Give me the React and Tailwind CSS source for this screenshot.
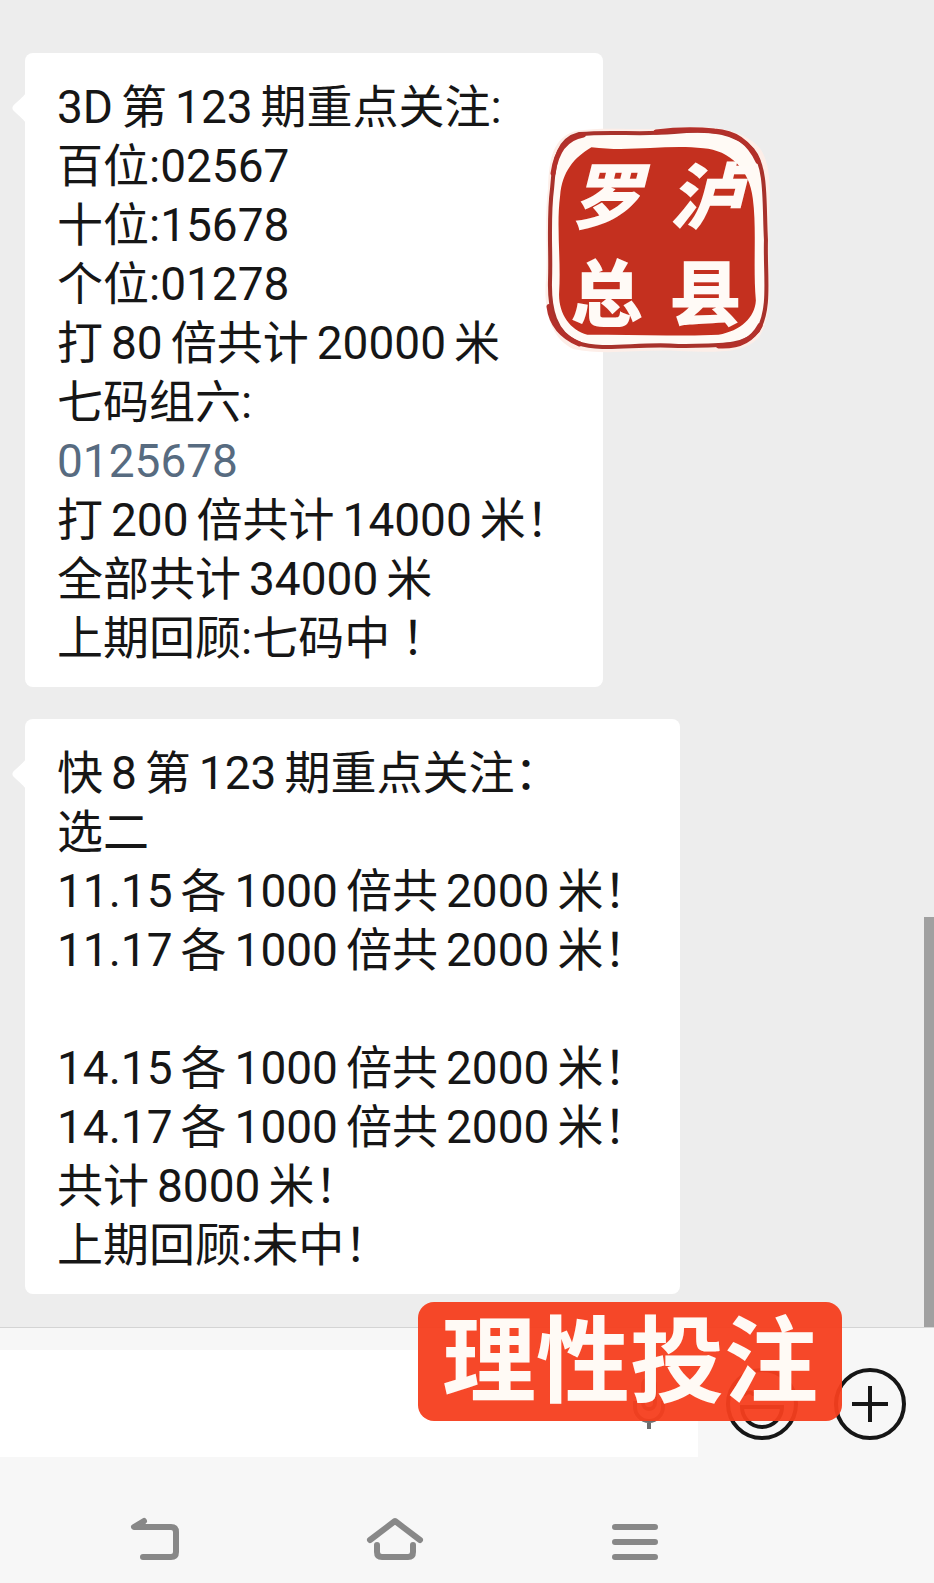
import React, { useState } from "react";

// Latin digits inside Chinese text get a little air on both sides
const Num = ({ children }) => <span className="mx-2">{children}</span>;

const BubbleTail = () => (
  <svg
    className="absolute -left-[13px] top-[40px] h-[30px] w-[14px] text-white"
    viewBox="0 0 14 30"
    fill="currentColor"
    aria-hidden="true"
  >
    <path d="M14 0C11 4 5 9 1.6 12.2Q-.8 15 1.6 17.8C5 21 11 26 14 30Z" />
  </svg>
);

const Bubble = ({ children }) => (
  <div className="relative w-fit rounded-lg bg-white pt-[25px] pr-[31px] pb-[19px] pl-8 text-[46px] leading-[59px] whitespace-nowrap text-[#161616]">
    <BubbleTail />
    {children}
  </div>
);

const Seal = () => (
  <div className="absolute top-[74px] left-[520px] h-[226px] w-[226px]">
    <svg className="h-full w-full" viewBox="0 0 224 224" aria-hidden="true">
      <path
        d="M30 4C60 -1 90 4 128 1C165 -3 198 3 213 21C228 42 221 82 222 112C221 146 228 180 213 207C199 226 168 223 132 222C94 220 60 227 28 220C7 210 -2 184 1 151C3 119 -1 91 3 61C4 31 8 11 30 4Z"
        fill="#fdeee8"
      />
      <path
        d="M34 7C68 4 91 8 128 5C165 1 190 5 206 23C220 40 217 76 219 112C218 148 224 179 211 202C197 219 170 216 132 217C91 214 58 223 32 214C10 204 4 181 5 151C6 122 3 91 7 61C9 30 14 12 34 7Z"
        fill="#fffaf5"
        stroke="#a8322b"
        strokeWidth="4"
      />
      <path
        d="M34 215C15 207 6 194 4 178M8 46C11 24 20 11 38 8M110 5Q140 1 168 4C186 5 202 14 211 34M213 197C205 212 190 218 172 217"
        fill="none"
        stroke="#b3302a"
        strokeWidth="5"
        strokeLinecap="round"
      />
      <path
        d="M46 20C85 25 120 17 157 21C183 23 203 42 206 71C210 102 206 138 209 172C208 189 194 202 172 206C133 208 86 205 42 206C24 201 13 184 14 164C16 131 11 99 15 68C17 44 29 30 46 20Z"
        fill="#c4301f"
      />
    </svg>
    <div className="absolute inset-0 grid grid-cols-2 place-items-center py-4 pr-4 pl-3 font-['Noto_Sans_CJK_SC',sans-serif] text-[72px] leading-[86px] font-black text-[#fffaf6]">
      <span className="italic">罗</span>
      <span className="italic">泸</span>
      <span>总</span>
      <span>县</span>
    </div>
  </div>
);

const MicIcon = () => (
  <svg width="34" height="54" viewBox="0 0 34 54" fill="none" stroke="#6b6b6b" strokeWidth="4">
    <rect x="11" y="2" width="12" height="30" rx="6" />
    <path d="M3 24v6a14 14 0 0 0 28 0v-6M17 44v8" />
  </svg>
);

const SmileIcon = () => (
  <svg width="72" height="72" viewBox="0 0 72 72" fill="none" stroke="#161616" strokeWidth="4">
    <circle cx="36" cy="36" r="34" />
    <path d="M16 39h40a20 20 0 0 1-40 0Z" />
    <path d="M19 26a6 6 0 0 1 8 0M45 26a6 6 0 0 1 8 0" strokeLinecap="round" />
  </svg>
);

const PlusIcon = () => (
  <svg width="72" height="72" viewBox="0 0 72 72" fill="none" stroke="#161616" strokeWidth="4">
    <circle cx="36" cy="36" r="34" />
    <path d="M36 18v36M18 36h36" />
  </svg>
);

const InputBar = () => {
  const [text, setText] = useState("");

  return (
    <div className="relative flex items-center gap-9 pr-7">
      <div className="-mr-2 flex h-[107px] min-w-0 flex-1 items-center bg-white pr-8">
        <input
          type="text"
          aria-label="消息"
          value={text}
          onChange={(e) => setText(e.target.value)}
          className="h-full min-w-0 flex-1 px-8 text-[46px] outline-none"
        />
        <button type="button" aria-label="语音">
          <MicIcon />
        </button>
      </div>
      <button type="button" aria-label="表情">
        <SmileIcon />
      </button>
      <button type="button" aria-label="更多">
        <PlusIcon />
      </button>

      {/* Sticker over the input bar */}
      <div className="absolute right-[92px] -top-12 flex h-[119px] w-[424px] items-center justify-center rounded-2xl bg-[#f63e1e]/95 pt-1 text-[94px] leading-[115px] font-bold whitespace-nowrap text-[#fffaf5]">
        理性投注
      </div>
    </div>
  );
};

const NavBar = () => (
  <nav className="grid grid-cols-3 place-items-center pt-[60px] pr-[179px] pb-[22px] pl-[35px]">
    <button type="button" aria-label="返回">
      <svg width="50" height="44" viewBox="0 0 50 44" fill="none" stroke="#888" strokeWidth="6" strokeLinecap="round" strokeLinejoin="round">
        <path d="M14 4L4 10H41Q46 10 46 15V35Q46 40 41 40H13" />
        <path d="M5 9L14 4V10Z" fill="#888" strokeWidth="3" />
      </svg>
    </button>
    <button type="button" aria-label="主页">
      <svg width="58" height="44" viewBox="0 0 58 44" fill="none" stroke="#888" strokeWidth="6" strokeLinecap="round" strokeLinejoin="round">
        <path d="M4 23L29 4L54 23" />
        <path d="M11 28V35Q11 40 16 40H42Q47 40 47 35V28" />
      </svg>
    </button>
    <button type="button" aria-label="菜单">
      <svg width="46" height="44" viewBox="0 0 46 44" fill="none" stroke="#888" strokeWidth="6" strokeLinecap="round">
        <path d="M3 10H43M3 25H43M3 40H43" />
      </svg>
    </button>
  </nav>
);

const App = () => {
  return (
    <div className="flex min-h-screen flex-col overflow-x-hidden bg-[#f7f7f7] font-[Roboto,'Noto_Sans_CJK_SC',sans-serif]">
      <main className="relative flex flex-1 flex-col gap-8 border-b border-[#d4d4d4] bg-[#ededed] px-[25px] pt-[53px] pb-[33px]">
        <Bubble>
          <p>
            3D<Num>第</Num>123<span className="ml-2">期重点关注:</span>
          </p>
          <p>百位:02567</p>
          <p>十位:15678</p>
          <p>个位:01278</p>
          <p>
            打<Num>80</Num>倍共计<Num>20000</Num>米
          </p>
          <p>七码组六:</p>
          <p>
            <a href="tel:0125678" className="text-[#576b80]">
              0125678
            </a>
          </p>
          <p>
            打<Num>200</Num>倍共计<Num>14000</Num>米！
          </p>
          <p>
            全部共计<Num>34000</Num>米
          </p>
          <p>上期回顾:七码中 ！</p>
          <Seal />
        </Bubble>

        <Bubble>
          <p>
            快<Num>8</Num>第<Num>123</Num>期重点关注：
          </p>
          <p>选二</p>
          {["11.15", "11.17"].map((pair) => (
            <p key={pair}>
              {pair}
              <Num>各</Num>1000<Num>倍共</Num>2000<span className="ml-2">米！</span>
            </p>
          ))}
          <br />
          {["14.15", "14.17"].map((pair) => (
            <p key={pair}>
              {pair}
              <Num>各</Num>1000<Num>倍共</Num>2000<span className="ml-2">米！</span>
            </p>
          ))}
          <p>
            共计<Num>8000</Num>米！
          </p>
          <p>上期回顾:未中！</p>
        </Bubble>

        {/* Scroll thumb */}
        <div className="absolute right-0 bottom-0 h-[410px] w-[10px] bg-[#a0a0a0]" />
      </main>

      <footer className="pt-[22px]">
        <InputBar />
        <NavBar />
      </footer>
    </div>
  );
};

export default App;
